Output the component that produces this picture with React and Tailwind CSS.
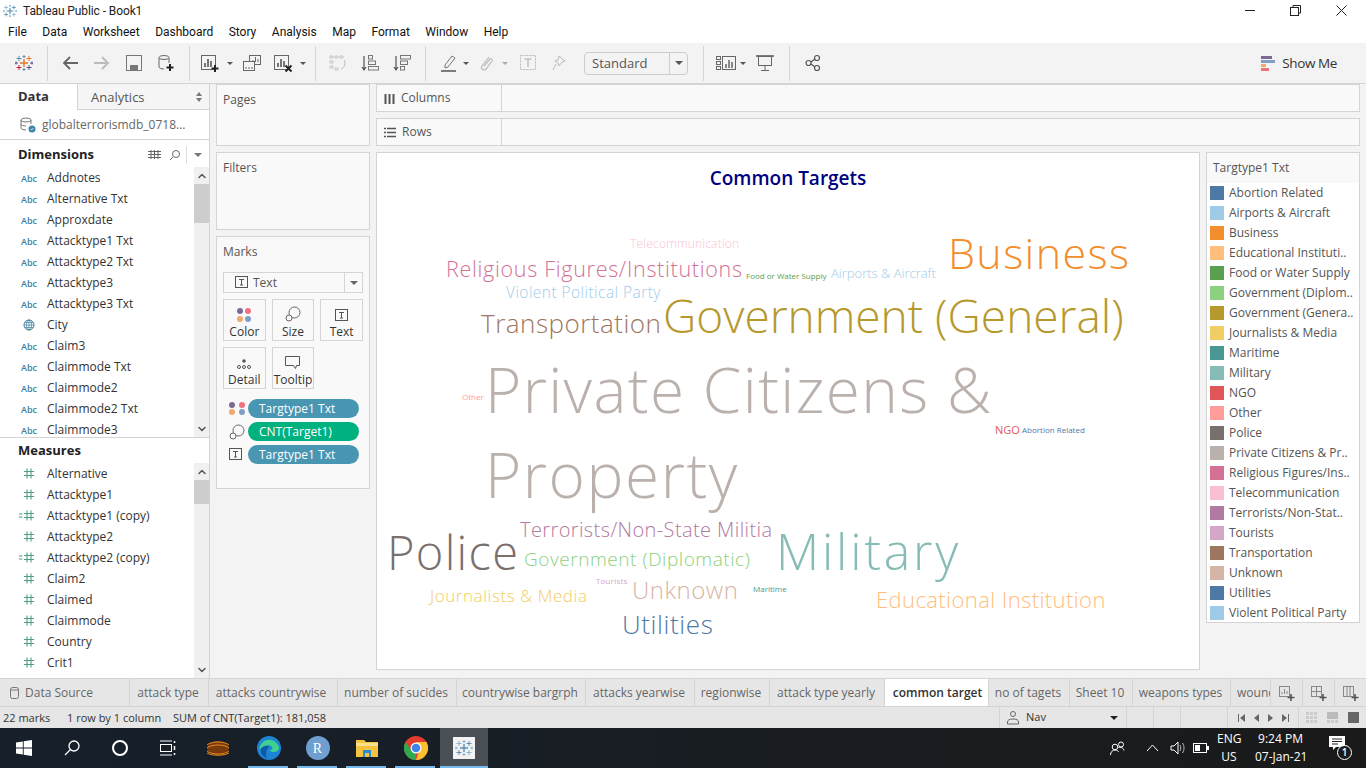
import React from 'react';
import { ChevronUp, ChevronDown } from 'lucide-react';

const menus = ['File', 'Data', 'Worksheet', 'Dashboard', 'Story', 'Analysis', 'Map', 'Format', 'Window', 'Help'];

const dimensions = [
  'Addnotes', 'Alternative Txt', 'Approxdate', 'Attacktype1 Txt', 'Attacktype2 Txt', 'Attacktype3',
  'Attacktype3 Txt', 'City', 'Claim3', 'Claimmode Txt', 'Claimmode2', 'Claimmode2 Txt', 'Claimmode3',
];

const measures = [
  'Alternative', 'Attacktype1', 'Attacktype1 (copy)', 'Attacktype2', 'Attacktype2 (copy)',
  'Claim2', 'Claimed', 'Claimmode', 'Country', 'Crit1',
];

const legend = [
  ['Abortion Related', 'bg-[#4e79a7]'],
  ['Airports & Aircraft', 'bg-[#a0cbe8]'],
  ['Business', 'bg-[#f28e2b]'],
  ['Educational Instituti..', 'bg-[#ffbe7d]'],
  ['Food or Water Supply', 'bg-[#59a14f]'],
  ['Government (Diplom..', 'bg-[#8cd17d]'],
  ['Government (Genera..', 'bg-[#b6992d]'],
  ['Journalists & Media', 'bg-[#f1ce63]'],
  ['Maritime', 'bg-[#499894]'],
  ['Military', 'bg-[#86bcb6]'],
  ['NGO', 'bg-[#e15759]'],
  ['Other', 'bg-[#ff9d9a]'],
  ['Police', 'bg-[#79706e]'],
  ['Private Citizens & Pr..', 'bg-[#bab0ac]'],
  ['Religious Figures/Ins..', 'bg-[#d37295]'],
  ['Telecommunication', 'bg-[#fabfd2]'],
  ['Terrorists/Non-Stat..', 'bg-[#b07aa1]'],
  ['Tourists', 'bg-[#d4a6c8]'],
  ['Transportation', 'bg-[#9d7660]'],
  ['Unknown', 'bg-[#d7b5a6]'],
  ['Utilities', 'bg-[#4e79a7]'],
  ['Violent Political Party', 'bg-[#a0cbe8]'],
];

// word cloud: place on the canvas is the content here
const words = [
  ['Telecommunication', 'left-[253px] top-[85px] text-[12px] tracking-[0.2px] font-light text-[#fabfd2]'],
  ['Religious Figures/Institutions', 'left-[69px] top-[105px] text-[21.5px] tracking-[0.7px] font-light text-[#d37295]'],
  ['Food or Water Supply', 'left-[369px] top-[119px] text-[8px] font-normal text-[#59a14f]'],
  ['Airports & Aircraft', 'left-[454px] top-[114px] text-[13px] font-light text-[#a0cbe8]'],
  ['Business', 'left-[571px] top-[78px] text-[43px] tracking-[1.4px] font-light text-[#f28e2b]'],
  ['Violent Political Party', 'left-[129px] top-[132px] text-[15.5px] tracking-[0.45px] font-light text-[#a0cbe8]'],
  ['Transportation', 'left-[104px] top-[157px] text-[26px] tracking-[0.5px] font-light text-[#9d7660]'],
  ['Government (General)', 'left-[286px] top-[139px] text-[46px] font-light text-[#b6992d]'],
  ['Private Citizens &', 'left-[108px] top-[205px] text-[62px] tracking-[1.4px] font-light text-[#bab0ac]'],
  ['Other', 'left-[85px] top-[240px] text-[8px] font-normal text-[#ff9d9a]'],
  ['NGO', 'left-[618px] top-[271px] text-[11px] font-normal text-[#e15759]'],
  ['Abortion Related', 'left-[645px] top-[273px] text-[8px] font-normal text-[#4e79a7]'],
  ['Property', 'left-[108px] top-[290px] text-[62px] tracking-[1.6px] font-light text-[#bab0ac]'],
  ['Terrorists/Non-State Militia', 'left-[143px] top-[367px] text-[20px] tracking-[0.4px] font-light text-[#b07aa1]'],
  ['Police', 'left-[10px] top-[376px] text-[47px] tracking-[1.3px] font-light text-[#79706e]'],
  ['Government (Diplomatic)', 'left-[147px] top-[397px] text-[19px] tracking-[0.55px] font-light text-[#8cd17d]'],
  ['Military', 'left-[399px] top-[373px] text-[50px] tracking-[2.8px] font-light text-[#86bcb6]'],
  ['Tourists', 'left-[219px] top-[424px] text-[8px] tracking-[0.2px] font-normal text-[#d4a6c8]'],
  ['Journalists & Media', 'left-[53px] top-[434px] text-[17px] tracking-[0.55px] font-light text-[#f1ce63]'],
  ['Unknown', 'left-[255px] top-[425px] text-[24px] tracking-[0.5px] font-light text-[#d7b5a6]'],
  ['Maritime', 'left-[376px] top-[432px] text-[8px] font-normal text-[#499894]'],
  ['Educational Institution', 'left-[499px] top-[435px] text-[22px] tracking-[0.4px] font-light text-[#ffbe7d]'],
  ['Utilities', 'left-[245px] top-[458px] text-[26px] tracking-[0.6px] font-light text-[#4e79a7]'],
];

const tabs = [
  ['attack type', 'w-[79px] pr-[2px]'],
  ['attacks countrywise', 'w-[129px] pr-[4px]'],
  ['number of sucides', 'w-[119px] pr-[2px]'],
  ['countrywise bargrph', 'w-[129px] pr-[2px]'],
  ['attacks yearwise', 'w-[109px] pr-[2px]'],
  ['regionwise', 'w-[75px] pr-[2px]'],
  ['attack type yearly', 'w-[115px] pr-[2px]'],
  ['common target', 'w-[104px] pl-[2px] bg-white font-semibold text-[#333]'],
  ['no of tagets', 'w-[81px] pr-[2px]'],
  ['Sheet 10', 'w-[63px] pr-[2px]'],
  ['weapons types', 'w-[98px] pr-[2px]'],
];

const TableauMark = ({ size = 18, c1 = '#e8762b', c2 = '#5b8fb5', c3 = '#c72035', c4 = '#5a4f8a' }) => (
  <svg width={size} height={size} viewBox="0 0 18 18" fill="none" strokeWidth="1">
    <path d="M9 5v8M5 9h8" stroke={c1} strokeWidth="1.400" />
    <path d="M4 2v5M1.500 4.500h5" stroke={c2} />
    <path d="M14 2v5M11.500 4.500h5" stroke={c1} />
    <path d="M4 11v5M1.500 13.500h5" stroke={c3} />
    <path d="M14 11v5M11.500 13.500h5" stroke={c4} />
    <path d="M9 1v3M7.500 2.500h3M9 14v3M7.500 15.500h3" stroke={c2} />
    <path d="M1 7.500v3M0 9h3M17 7.500v3M15 9h3" stroke={c4} />
  </svg>
);

const Svg = ({ w = 18, h = 18, children, className = '' }) => (
  <svg width={w} height={h} viewBox={`0 0 ${w} ${h}`} fill="none" className={className}>
    {children}
  </svg>
);

const Caret = ({ light }) => (
  <div className={`w-0 h-0 border-x-[3px] border-x-transparent border-t-[3px] ${light ? 'border-t-[#aaa]' : 'border-t-[#555]'}`} />
);

const BarsIcon = ({ plus, cross }) => (
  <Svg w={20} h={20}>
    <rect x="1.500" y="2.500" width="14" height="14" stroke="#666" />
    <path d="M5 14V10M8 14V6M11 14V8" stroke="#555" strokeWidth="1.600" />
    {plus && <path d="M15 12v7M11.500 15.500h7" stroke="#222" strokeWidth="2" />}
    {cross && <path d="M12.500 12.500l6 6M18.500 12.500l-6 6" stroke="#222" strokeWidth="2" />}
  </Svg>
);

const ToolSep = () => <div className="w-px h-[35px] bg-[#d4d4d4]" />;

const Toolbar = () => (
  <div className="h-[41px] bg-[#f3f3f3] flex items-center border-b border-[#d4d4d4] shrink-0 relative">
    <div className="w-[47px] flex justify-center"><TableauMark /></div>
    <ToolSep />
    <div className="w-[141px] flex items-center pl-[13px] gap-[14px]">
      <Svg><path d="M17 9H3M9 3L3 9l6 6" stroke="#666" strokeWidth="1.800" /></Svg>
      <Svg><path d="M1 9h14M9 3l6 6-6 6" stroke="#bbb" strokeWidth="1.800" /></Svg>
      <Svg>
        <rect x="1.500" y="1.500" width="15" height="15" stroke="#777" />
        <rect x="5" y="11" width="8" height="5" fill="#777" />
      </Svg>
      <Svg>
        <ellipse cx="7" cy="3.500" rx="5" ry="2" stroke="#666" />
        <path d="M2 4v9c0 1 2 2 5 2M12 4v5" stroke="#666" />
        <path d="M13 10v7M9.500 13.500h7" stroke="#222" strokeWidth="2" />
      </Svg>
    </div>
    <ToolSep />
    <div className="w-[125px] flex items-center pl-[10px]">
      <BarsIcon plus />
      <div className="ml-[7px]"><Caret /></div>
      <div className="ml-[10px]">
        <Svg>
          <rect x="6.500" y="1.500" width="11" height="9" stroke="#666" fill="#f3f3f3" />
          <path d="M10 8V6M12.500 8V3M15 8V5" stroke="#666" />
          <rect x="0.500" y="7.500" width="11" height="9" stroke="#666" fill="#f3f3f3" />
          <path d="M3 15v-2M6 15v-2M9 15v-2" stroke="#666" />
        </Svg>
      </div>
      <div className="ml-[12px]"><BarsIcon cross /></div>
      <div className="ml-[7px]"><Caret /></div>
    </div>
    <ToolSep />
    <div className="w-[109px] flex items-center pl-[13px] gap-[14px]">
      <Svg>
        <path d="M1 2h3v2H1zM6 2h3v2H6zM11 2h3v2h-3zM1 7h3v2H1zM1 12h3v2H1zM6 14h3v2H6z" stroke="#bbb" strokeWidth="0.800" />
        <path d="M15 6c2 3 1 7-3 9" stroke="#bbb" />
      </Svg>
      <Svg>
        <path d="M3 2v13M1 13l2 3 2-3" stroke="#555" strokeWidth="1.200" />
        <rect x="7.500" y="1.500" width="4" height="3.500" stroke="#777" />
        <rect x="7.500" y="7" width="7" height="3.500" stroke="#777" />
        <rect x="7.500" y="12.500" width="10" height="3.500" stroke="#777" />
      </Svg>
      <Svg>
        <path d="M3 2v13M1 13l2 3 2-3" stroke="#555" strokeWidth="1.200" />
        <rect x="7.500" y="1.500" width="10" height="3.500" stroke="#777" />
        <rect x="7.500" y="7" width="7" height="3.500" stroke="#777" />
        <rect x="7.500" y="12.500" width="4" height="3.500" stroke="#777" />
      </Svg>
    </div>
    <ToolSep />
    <div className="w-[158px] flex items-center pl-[14px]">
      <Svg>
        <path d="M5 11l7-9 3 2-7 9-3 1z" stroke="#777" />
        <path d="M1 17h15" stroke="#555" strokeWidth="1.500" />
      </Svg>
      <div className="ml-[5px]"><Caret /></div>
      <div className="ml-[8px]">
        <Svg>
          <path d="M12 3L5 12c-2 3 2 5 4 3l6-8c1-2-1-3-2-2L7 12" stroke="#bbb" strokeWidth="1.200" />
        </Svg>
      </div>
      <div className="ml-[7px]"><Caret light /></div>
      <div className="ml-[11px]">
        <Svg>
          <rect x="1.500" y="1.500" width="15" height="14" stroke="#bbb" strokeDasharray="2 1" />
          <path d="M5.500 5h7M9 5v8" stroke="#aaa" />
        </Svg>
      </div>
      <div className="ml-[13px]">
        <Svg>
          <path d="M9 2l6 5-3 1-3 4-1-3-3-2 3-1zM6 10l-3 6" stroke="#bbb" />
        </Svg>
      </div>
    </div>
    <div className="w-[104px] h-[23px] rounded-sm border border-[#ccc] flex items-center">
      <div className="flex-1 pl-[7px] pt-px text-[13px] text-[#555]">Standard</div>
      <div className="w-[18px] h-full border-l border-[#ccc] flex items-center justify-center">
        <div className="w-0 h-0 border-x-[4px] border-x-transparent border-t-[4px] border-t-[#555]" />
      </div>
    </div>
    <div className="ml-[15px]"><ToolSep /></div>
    <div className="w-[85px] flex items-center pl-[12px]">
      <Svg w={20} h={18}>
        <rect x="0.500" y="2.500" width="4" height="3" stroke="#666" />
        <rect x="0.500" y="7.500" width="4" height="3" stroke="#666" />
        <rect x="0.500" y="12.500" width="4" height="3" stroke="#666" />
        <rect x="6.500" y="2.500" width="13" height="13" stroke="#666" />
        <path d="M10 14v-4M13 14V6M16 14V8" stroke="#666" strokeWidth="1.500" />
      </Svg>
      <div className="ml-[4px]"><Caret /></div>
      <div className="ml-[10px]">
        <Svg>
          <path d="M0 2h18" stroke="#555" strokeWidth="1.500" />
          <rect x="2.500" y="2.500" width="13" height="9" stroke="#666" />
          <path d="M9 12v4M5 16.500h8" stroke="#666" />
        </Svg>
      </div>
    </div>
    <ToolSep />
    <div className="pl-[15px]">
      <Svg w={16} h={18}>
        <circle cx="3.500" cy="9" r="2.500" stroke="#555" strokeWidth="1.200" />
        <circle cx="12" cy="4" r="2.500" stroke="#555" strokeWidth="1.200" />
        <circle cx="12" cy="14" r="2.500" stroke="#555" strokeWidth="1.200" />
        <path d="M6 8l4-3M6 10l4 3" stroke="#555" strokeWidth="1.200" />
      </Svg>
    </div>
    <div className="ml-auto mr-[29px] flex items-center gap-[7px]">
      <div className="flex flex-col gap-px">
        <div className="w-[11px] h-[3px] bg-[#7b6a96]" />
        <div className="w-[14px] h-[3px] bg-[#7f9fc9]" />
        <div className="w-[5px] h-[3px] bg-[#f3a96b]" />
        <div className="w-[8px] h-[3px] bg-[#f0727d]" />
      </div>
      <span className="text-[13.5px] text-[#333] tracking-[-0.4px]">Show Me</span>
    </div>
  </div>
);

const ScrollColumn = ({ thumb }) => (
  <div className="w-[15px] bg-[#f0f0f0] flex flex-col shrink-0">
    <div className="h-[17px] flex items-center justify-center"><ChevronUp size={12} strokeWidth={3} color="#555" /></div>
    <div className="flex-1">
      <div className={`bg-[#cdcdcd] ${thumb}`} />
    </div>
    <div className="h-[17px] flex items-center justify-center"><ChevronDown size={12} strokeWidth={3} color="#555" /></div>
  </div>
);

const Hash = () => (
  <Svg w={10} h={11} className="shrink-0">
    <path d="M3 0.500v10M7 0.500v10M0 3.500h10M0 7.500h10" stroke="#4f9e80" strokeWidth="1.100" />
  </Svg>
);

const DataPane = () => (
  <div className="w-[210px] bg-white border-r border-[#d4d4d4] flex flex-col shrink-0 text-[12px] text-[#333]">
    <div className="h-[26px] flex shrink-0">
      <div className="w-[77px] pl-[18px] flex items-center font-bold text-[13px]">Data</div>
      <div className="flex-1 bg-[#f5f5f5] border-l border-b border-[#d4d4d4] pl-[13px] pt-[2px] flex items-center text-[13px] text-[#555] relative">
        Analytics
        <div className="absolute right-[7px] top-[8px] flex flex-col gap-[2px]">
          <div className="w-0 h-0 border-x-[3px] border-x-transparent border-b-[4px] border-b-[#777]" />
          <div className="w-0 h-0 border-x-[3px] border-x-transparent border-t-[4px] border-t-[#777]" />
        </div>
      </div>
    </div>
    <div className="h-[30px] border-b border-[#d4d4d4] flex items-center pl-[20px] shrink-0">
      <Svg w={16} h={16} className="shrink-0">
        <ellipse cx="6" cy="3" rx="5" ry="2" stroke="#777" />
        <path d="M1 3v8c0 1 2 2 5 2M11 3v4M1 7c0 1 2 2 5 2" stroke="#777" />
        <circle cx="12" cy="12" r="3.500" fill="#3d86a8" />
        <path d="M10.500 12l1 1 2-2" stroke="#fff" strokeWidth="0.800" />
      </Svg>
      <span className="ml-[6px] text-[#666] whitespace-nowrap">globalterrorismdb_0718...</span>
    </div>
    <div className="h-[27px] pt-[2px] flex items-center shrink-0 relative">
      <span className="pl-[18px] font-bold text-[13px] text-[#222]">Dimensions</span>
      <div className="ml-auto flex items-center pr-[7px]">
        <Svg w={13} h={10}>
          <path d="M0 1.500h13M0 4.500h13M0 7.500h13M3 0v9M6.500 0v9M10 0v9" stroke="#666" />
        </Svg>
        <Svg w={14} h={12} className="ml-[7px]">
          <circle cx="8" cy="5" r="3.500" stroke="#666" />
          <path d="M5 8l-3 3" stroke="#666" />
        </Svg>
        <div className="w-px h-[18px] bg-[#ddd] ml-[4px]" />
        <div className="ml-[7px] w-0 h-0 border-x-[4px] border-x-transparent border-t-[4px] border-t-[#777]" />
      </div>
    </div>
    <div className="h-[271px] flex border-b border-[#d4d4d4] shrink-0">
      <div className="flex-1 overflow-hidden">
        {dimensions.map((name) => (
          <div key={name} className="h-[21px] flex items-center whitespace-nowrap">
            <div className="w-[47px] pl-[21px] shrink-0">
              {name === 'City' ? (
                <Svg w={12} h={12} className="ml-[2px]">
                  <circle cx="6" cy="6" r="5" stroke="#3e7f9e" />
                  <path d="M1 6h10M6 1v10M2 3.500h8M2 8.500h8" stroke="#3e7f9e" strokeWidth="0.700" />
                  <ellipse cx="6" cy="6" rx="2.500" ry="5" stroke="#3e7f9e" strokeWidth="0.700" />
                </Svg>
              ) : (
                <span className="text-[9px] font-semibold text-[#3e7f9e]">Abc</span>
              )}
            </div>
            <span>{name}</span>
          </div>
        ))}
      </div>
      <ScrollColumn thumb="h-[39px]" />
    </div>
    <div className="h-[25px] pt-[1px] flex items-center pl-[18px] font-bold text-[13px] text-[#222] shrink-0">Measures</div>
    <div className="flex-1 flex min-h-0">
      <div className="flex-1 overflow-hidden">
        {measures.map((name) => (
          <div key={name} className="h-[21px] flex items-center whitespace-nowrap">
            <div className="w-[47px] pl-[24px] shrink-0 flex items-center relative">
              {name.includes('copy') && (
                <Svg w={4} h={5} className="absolute left-[19px]">
                  <path d="M0 1h3.500M0 4h3.500" stroke="#4f9e80" />
                </Svg>
              )}
              <Hash />
            </div>
            <span>{name}</span>
          </div>
        ))}
      </div>
      <ScrollColumn thumb="h-[24px]" />
    </div>
  </div>
);

const Card = ({ className = '', title, children }) => (
  <div className={`bg-[#f9f9f9] border border-[#d4d4d4] ${className}`}>
    <div className="pl-[6px] pt-[7px] text-[12px] leading-[15px] text-[#555]">{title}</div>
    {children}
  </div>
);

const ColorDots = ({ big }) => (
  <div className={`grid grid-cols-2 ${big ? 'gap-[2px]' : 'gap-[1px]'}`}>
    <div className="rounded-full bg-[#7b6a96] w-[6px] h-[6px]" />
    <div className="rounded-full bg-[#f0727d] w-[6px] h-[6px]" />
    <div className="rounded-full bg-[#f3a96b] w-[6px] h-[6px]" />
    <div className="rounded-full bg-[#7f9fc9] w-[6px] h-[6px]" />
  </div>
);

const SizeIcon = () => (
  <Svg w={16} h={16}>
    <circle cx="9.500" cy="6.500" r="5.500" stroke="#666" />
    <circle cx="4" cy="12" r="3" stroke="#666" fill="#f9f9f9" />
  </Svg>
);

const TIcon = () => (
  <Svg w={13} h={13}>
    <rect x="0.500" y="0.500" width="12" height="11" stroke="#555" />
    <path d="M4 3.500h5M6.500 3.500v5.500M5 9h3" stroke="#555" />
  </Svg>
);

const MarkBtn = ({ label, icon }) => (
  <div className="h-[42px] border border-[#d4d4d4] flex flex-col items-center text-[12px] text-[#333]">
    <div className="h-[24px] flex items-end">{icon}</div>
    <div className="leading-[16px] mt-[2px]">{label}</div>
  </div>
);

const Pill = ({ icon, label, green }) => (
  <div className="flex items-center h-[19px] mb-[4px]">
    <div className="w-[25px] pl-[6px] shrink-0">{icon}</div>
    <div className={`w-[111px] h-[19px] rounded-full pl-[11px] text-white text-[12px] leading-[19px] ${green ? 'bg-[#00b180]' : 'bg-[#4996b2]'}`}>{label}</div>
  </div>
);

const ShelfColumn = () => (
  <div className="w-[154px] flex flex-col gap-[6px] shrink-0">
    <Card title="Pages" className="h-[62px]" />
    <Card title="Filters" className="h-[78px]" />
    <Card title="Marks" className="h-[253px]">
      <div className="mx-[6px] mt-[13px] h-[21px] border border-[#d4d4d4] flex items-center text-[12px] text-[#555]">
        <div className="pl-[11px]"><TIcon /></div>
        <span className="ml-[5px] flex-1">Text</span>
        <div className="w-[18px] h-full border-l border-[#d4d4d4] flex items-center justify-center">
          <div className="w-0 h-0 border-x-[4px] border-x-transparent border-t-[4px] border-t-[#666]" />
        </div>
      </div>
      <div className="mx-[6px] mt-[6px] grid grid-cols-3 gap-x-[6px] gap-y-[6px]">
        <MarkBtn label="Color" icon={<ColorDots big />} />
        <MarkBtn label="Size" icon={<SizeIcon />} />
        <MarkBtn label="Text" icon={<TIcon />} />
        <MarkBtn label="Detail" icon={
          <Svg w={14} h={11}>
            <circle cx="7" cy="2" r="1.800" fill="#555" />
            <circle cx="2" cy="8" r="1.500" stroke="#555" />
            <circle cx="7" cy="8" r="1.500" stroke="#555" />
            <circle cx="12" cy="8" r="1.500" stroke="#555" />
          </Svg>
        } />
        <MarkBtn label="Tooltip" icon={
          <Svg w={15} h={14}>
            <path d="M0.500 0.500h14v9h-3l-1 3-2-3H0.500z" stroke="#555" />
          </Svg>
        } />
      </div>
      <div className="mt-[10px] ml-[6px]">
        <Pill icon={<ColorDots />} label="Targtype1 Txt" />
        <Pill icon={<SizeIcon />} label="CNT(Target1)" green />
        <Pill icon={<TIcon />} label="Targtype1 Txt" />
      </div>
    </Card>
  </div>
);

const Shelf = ({ icon, label }) => (
  <div className="h-[28px] bg-[#f9f9f9] border border-[#d4d4d4] flex text-[12px] text-[#555]">
    <div className="w-[125px] border-r border-[#d4d4d4] flex items-center pl-[7px] gap-[6px]">
      {icon}
      <span>{label}</span>
    </div>
  </div>
);

const Viz = () => (
  <div className="w-[824px] h-[518px] bg-white border border-[#d4d4d4] relative overflow-hidden shrink-0">
    <div className="pt-[13px] text-center text-[19px] font-semibold leading-[25px] text-[#000080]">Common Targets</div>
    {words.map(([text, cls]) => (
      <span key={text} className={`absolute leading-none whitespace-nowrap ${cls}`}>{text}</span>
    ))}
  </div>
);

const Legend = () => (
  <div className="w-[154px] h-[471px] bg-white border border-[#d4d4d4] shrink-0">
    <div className="h-[30px] bg-[#f9f9f9] pl-[6px] flex items-center text-[12px] text-[#555]">Targtype1 Txt</div>
    {legend.map(([label, color]) => (
      <div key={label} className="h-[20px] flex items-center pl-[3px] text-[12px] text-[#555] whitespace-nowrap">
        <div className={`w-[14px] h-[14px] shrink-0 ${color}`} />
        <span className="ml-[5px]">{label}</span>
      </div>
    ))}
  </div>
);

const TabBar = () => (
  <div className="h-[29px] flex bg-[#e6e6e6] border-y border-[#d4d4d4] text-[12px] text-[#666] shrink-0">
    <div className="w-[130px] border-r border-[#d4d4d4] flex items-center pl-[10px] gap-[6px]">
      <Svg w={9} h={12}>
        <rect x="0.500" y="0.500" width="8" height="11" rx="2" stroke="#777" />
        <path d="M0.500 3h8" stroke="#777" />
      </Svg>
      Data Source
    </div>
    {tabs.map(([name, cls]) => (
      <div key={name} className={`border-r border-[#d4d4d4] flex items-center justify-center whitespace-nowrap ${cls}`}>{name}</div>
    ))}
    <div className="w-[39px] overflow-hidden flex items-center pl-[6px] whitespace-nowrap">wounded</div>
    {['sheet', 'dash', 'story'].map((kind) => (
      <div key={kind} className="w-[32px] border-l border-[#d4d4d4] flex items-center justify-center">
        <Svg w={18} h={18}>
          <rect x="1.500" y="2.500" width="10" height="10" stroke="#888" />
          {kind === 'sheet' && <path d="M4 10V8M6.500 10V5M9 10V7" stroke="#888" />}
          {kind === 'dash' && <path d="M1.500 7.500h10M6.500 2.500v10" stroke="#888" />}
          {kind === 'story' && <path d="M5 2.500v10M8 2.500v10" stroke="#888" />}
          <path d="M13 10v7M9.500 13.500h7" stroke="#555" strokeWidth="1.600" />
        </Svg>
      </div>
    ))}
  </div>
);

const StatusBar = () => (
  <div className="h-[21px] flex bg-[#e6e6e6] text-[11px] text-[#333] shrink-0">
    <div className="w-[999px] flex items-center pl-[3px] pt-px whitespace-nowrap">
      <span className="w-[64px]">22 marks</span>
      <span className="w-[106px]">1 row by 1 column</span>
      <span>SUM of CNT(Target1): 181,058</span>
    </div>
    <div className="w-[127px] border-l border-[#d4d4d4] flex items-center pl-[6px]">
      <Svg w={14} h={16}>
        <circle cx="7" cy="4" r="2.500" stroke="#666" />
        <path d="M1.500 14v-2c0-2 2-3 5.500-3s5.500 1 5.500 3v2z" stroke="#666" />
      </Svg>
      <span className="ml-[6px]">Nav</span>
      <div className="ml-auto mr-[8px] w-0 h-0 border-x-[4px] border-x-transparent border-t-[4px] border-t-[#222]" />
    </div>
    <div className="w-[27px] border-l border-[#d4d4d4]" />
    <div className="w-[27px] border-l border-[#d4d4d4]" />
    <div className="w-[47px] border-l border-[#d4d4d4]" />
    <div className="w-[71px] border-l border-[#d4d4d4] flex items-center justify-center gap-[9px]">
      <Svg w={7} h={8}><path d="M0.500 0v8" stroke="#666" /><path d="M7 0v8L2 4z" fill="#666" /></Svg>
      <Svg w={5} h={8}><path d="M5 0v8L0 4z" fill="#666" /></Svg>
      <Svg w={5} h={8}><path d="M0 0v8l5-4z" fill="#666" /></Svg>
      <Svg w={7} h={8}><path d="M6.500 0v8" stroke="#666" /><path d="M0 0v8l5-4z" fill="#666" /></Svg>
    </div>
    <div className="flex-1 border-l border-[#d4d4d4] flex items-center justify-center gap-[10px]">
      <Svg w={11} h={11}>
        <path d="M0 1.500h3M4 1.500h3M8 1.500h3M0 5.500h3M4 5.500h3M8 5.500h3M0 9.500h3M4 9.500h3M8 9.500h3" stroke="#ccc" strokeWidth="3" />
      </Svg>
      <div className="w-[11px] h-[11px] flex flex-col gap-px">
        <div className="h-[7px] bg-[#bbb]" />
        <div className="h-[3px] bg-[repeating-linear-gradient(90deg,#ccc_0,#ccc_3px,#e6e6e6_3px,#e6e6e6_4px)]" />
      </div>
      <div className="w-[11px] h-[11px] bg-[#666]" />
    </div>
  </div>
);

const Taskbar = () => (
  <div className="h-[40px] flex items-center bg-gradient-to-r from-[#16202b] to-[#1a1a1a] text-white relative shrink-0">
    <div className="w-[48px] flex justify-center">
      <Svg w={16} h={16}>
        <path d="M0 2.500l6.800-1v6.100H0zM7.700 1.300L16 0v7.600H7.700zM0 8.400h6.800v6.100l-6.800-1zM7.700 8.400H16V16l-8.300-1.300z" fill="#fff" />
      </Svg>
    </div>
    <div className="w-[48px] flex justify-center">
      <Svg w={16} h={16}>
        <circle cx="10" cy="6" r="5" stroke="#fff" strokeWidth="1.300" />
        <path d="M6.500 9.500L1 15" stroke="#fff" strokeWidth="1.300" />
      </Svg>
    </div>
    <div className="w-[48px] flex justify-center">
      <div className="w-[16px] h-[16px] rounded-full border-[2.500px] border-white" />
    </div>
    <div className="w-[48px] flex justify-center">
      <Svg w={16} h={16}>
        <path d="M0 1h12M0 15h12" stroke="#fff" />
        <rect x="0.500" y="4.500" width="11" height="7" stroke="#fff" />
        <path d="M14.500 1v2M14.500 6v4M14.500 13v2" stroke="#fff" strokeWidth="1.500" />
      </Svg>
    </div>
    <div className="w-[52px] flex justify-center">
      <Svg w={24} h={18}>
        <ellipse cx="12" cy="9" rx="11" ry="7" fill="#7a3a10" />
        <path d="M1 6c4-4 18-4 22 0M1 9c4-4 18-4 22 0M1 12c4 4 18 4 22 0M1 14c5 3 17 3 22 0" stroke="#e8891e" />
      </Svg>
    </div>
    <div className="w-[49px] flex justify-center">
      <Svg w={24} h={24}>
        <circle cx="12" cy="12" r="12" fill="#1d83d4" />
        <path d="M2 14C3 6 9 3 14 4c5 1 8 5 8 8 0 3-3 4-6 4-2 0-3-1-3-2 2 0 3-1 2-3-2-3-9-2-13 3z" fill="#3fcf8e" />
        <path d="M10 22c-4-1-7-5-6-9 2-3 6-4 8-2-3 2-4 7-2 11z" fill="#0c59a4" />
      </Svg>
    </div>
    <div className="w-[49px] flex justify-center">
      <div className="w-[24px] h-[24px] rounded-full bg-[#6f9fd0] flex items-center justify-center font-['Liberation_Serif',serif] text-[14px]">R</div>
    </div>
    <div className="w-[49px] flex justify-center">
      <Svg w={22} h={20}>
        <path d="M0 2h8l2 2h12v15H0z" fill="#f5c33f" />
        <path d="M0 5h22v3H0z" fill="#fbe08a" />
        <path d="M7 19v-7h8v7h-2v-4H9v4z" fill="#1f8fd6" />
      </Svg>
    </div>
    <div className="w-[49px] flex justify-center">
      <Svg w={24} h={24}>
        <circle cx="12" cy="12" r="12" fill="#e33b2e" />
        <path d="M12 24a12 12 0 0 1-10.400-18L7 14l5 3z" fill="#2da94f" />
        <path d="M12 24a12 12 0 0 0 10.400-18H12l4 6z" fill="#fbc02d" />
        <circle cx="12" cy="12" r="5.500" fill="#fff" />
        <circle cx="12" cy="12" r="4.300" fill="#3f84ea" />
      </Svg>
    </div>
    <div className="w-[48px] h-full bg-[#4a4f55] flex items-center justify-center">
      <div className="w-[22px] h-[22px] bg-[#f2f2f2] flex items-center justify-center">
        <TableauMark size={18} c1="#5b8fb5" c2="#8bb5d3" c3="#5b8fb5" c4="#8bb5d3" />
      </div>
    </div>
    {/* running app underlines */}
    <div className="absolute bottom-0 left-[248px] w-[40px] h-[2px] bg-[#76b9ed]" />
    <div className="absolute bottom-0 left-[297px] w-[40px] h-[2px] bg-[#76b9ed]" />
    <div className="absolute bottom-0 left-[346px] w-[40px] h-[2px] bg-[#76b9ed]" />
    <div className="absolute bottom-0 left-[395px] w-[40px] h-[2px] bg-[#76b9ed]" />
    <div className="absolute bottom-0 left-[440px] w-[48px] h-[2px] bg-[#76b9ed]" />

    <div className="ml-auto flex items-center pr-[14px]">
      <Svg w={15} h={15}>
        <circle cx="5" cy="6" r="2.800" stroke="#fff" />
        <circle cx="11" cy="3.500" r="2.500" stroke="#fff" />
        <path d="M0.500 14c0-3 2-5 4.500-5s3 1 3.500 2M8.500 6.500c2-.5 5 0 5.500 3" stroke="#fff" />
      </Svg>
      <Svg w={13} h={8} className="ml-[21px]"><path d="M1 7l5.500-6L12 7" stroke="#fff" /></Svg>
      <Svg w={16} h={14} className="ml-[11px]">
        <path d="M1 5h3l4-4v12L4 9H1z" stroke="#fff" />
        <path d="M10 4c1 2 1 4 0 6M12.500 2c2 3 2 7 0 10" stroke="#bbb" />
      </Svg>
      <Svg w={16} h={10} className="ml-[7px]">
        <rect x="0.500" y="0.500" width="13" height="9" stroke="#fff" />
        <rect x="2" y="2" width="5" height="6" fill="#fff" />
        <rect x="14" y="3" width="2" height="4" fill="#fff" />
      </Svg>
      <div className="ml-[8px] w-[24px] text-center text-[12px] leading-[18px]">ENG<br />US</div>
      <div className="ml-[14px] w-[51px] text-center text-[12px] leading-[18px] whitespace-nowrap">9:24 PM<br />07-Jan-21</div>
      <div className="ml-[23px] relative w-[23px] h-[24px]">
        <Svg w={16} h={14}>
          <path d="M0 0h16v11H7l-3 3v-3H0z" fill="#fff" />
          <path d="M3 3h10M3 5.500h10M3 8h6" stroke="#222" />
        </Svg>
        <div className="absolute right-0 bottom-0 w-[15px] h-[15px] rounded-full border border-white bg-[#1a1a1a] text-[10px] leading-[13px] text-center font-semibold">1</div>
      </div>
    </div>
  </div>
);

export default function App() {
  return (
    <div className="w-[1366px] h-[768px] flex flex-col overflow-hidden bg-[#f3f3f3] font-['Open_Sans',sans-serif]">
      {/* title bar */}
      <div className="h-[21px] bg-white flex items-center shrink-0 font-['Roboto',sans-serif]">
        <div className="pl-[3px] pr-[6px]"><TableauMark size={14} c1="#4a8bb0" c2="#7fb0cc" c3="#4a8bb0" c4="#7fb0cc" /></div>
        <span className="text-[12px] tracking-[-0.1px] text-[#222]">Tableau Public - Book1</span>
        <div className="ml-auto flex items-center pr-[19px]">
          <div className="w-[10px] h-px bg-[#222]" />
          <Svg w={11} h={11} className="ml-[35px]">
            <rect x="0.500" y="2.500" width="8" height="8" stroke="#222" />
            <path d="M3 2.500V0.500h7.500V8H8.500" stroke="#222" />
          </Svg>
          <Svg w={11} h={11} className="ml-[35px]">
            <path d="M0.500 0.500l10 10M10.500 0.500l-10 10" stroke="#222" />
          </Svg>
        </div>
      </div>
      {/* menu */}
      <div className="h-[22px] bg-white flex items-center gap-[15.5px] pl-[8px] text-[12px] text-[#111] shrink-0 font-['Roboto',sans-serif]">
        {menus.map((m) => <span key={m}>{m}</span>)}
      </div>
      <Toolbar />
      {/* workspace */}
      <div className="flex-1 flex min-h-0">
        <DataPane />
        <div className="flex-1 flex gap-[6px] pl-[6px] min-w-0">
          <ShelfColumn />
          <div className="flex-1 flex flex-col gap-[6px] min-w-0 pr-[6px]">
            <Shelf label="Columns" icon={
              <Svg w={11} h={11}><path d="M1.500 1v10M5.500 1v10M9.500 1v10" stroke="#555" strokeWidth="2" /></Svg>
            } />
            <Shelf label="Rows" icon={
              <Svg w={12} h={11}><path d="M0 1.500h2M3 1.500h9M0 5.500h2M3 5.500h9M0 9.500h2M3 9.500h9" stroke="#555" strokeWidth="1.500" /></Svg>
            } />
            <div className="flex gap-[6px]">
              <Viz />
              <Legend />
            </div>
          </div>
        </div>
      </div>
      <TabBar />
      <StatusBar />
      <Taskbar />
    </div>
  );
}
